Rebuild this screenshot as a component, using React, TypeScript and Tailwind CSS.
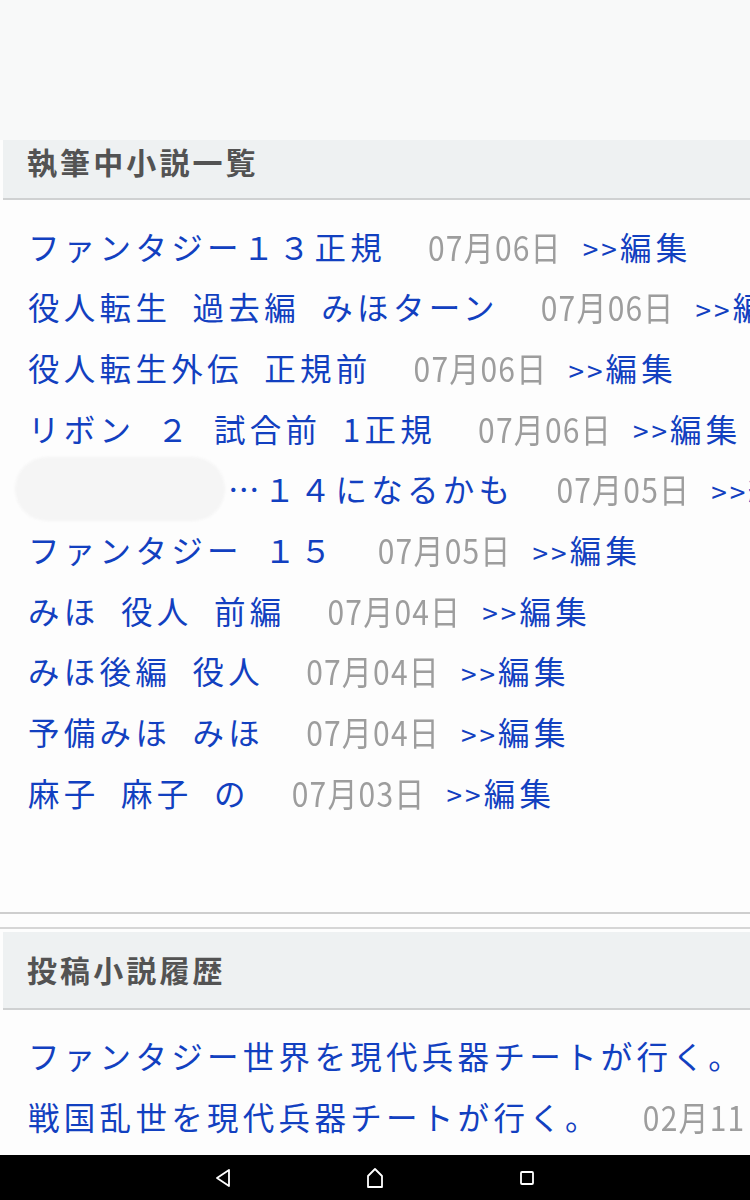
const drafts = [
  { title: "ファンタジー１３正規", date: "07月06日" },
  { title: "役人転生 過去編 みほターン", date: "07月06日" },
  { title: "役人転生外伝 正規前", date: "07月06日" },
  { title: "リボン ２ 試合前 1正規", date: "07月06日" },
  { title: "…１４になるかも", date: "07月05日", masked: true },
  { title: "ファンタジー １５", date: "07月05日" },
  { title: "みほ 役人 前編", date: "07月04日" },
  { title: "みほ後編 役人", date: "07月04日" },
  { title: "予備みほ みほ", date: "07月04日" },
  { title: "麻子 麻子 の", date: "07月03日" },
];

const posted = [
  { title: "ファンタジー世界を現代兵器チートが行く。", date: "02月11日" },
  { title: "戦国乱世を現代兵器チートが行く。", date: "02月11日" },
];

const font = { fontFamily: '"Noto Sans CJK JP", "Noto Sans", sans-serif' };

const SectionHeader = ({ label, tall }: { label: string; tall?: boolean }) => (
  <div
    className={`ml-[3px] flex items-center bg-[#eef1f2] border-b-2 border-[#cfd1d2] pl-[24px] ${
      tall ? "h-[78px]" : "h-[60px] pb-[16px]"
    }`}
  >
    <h2 className="text-[30px] font-bold tracking-[3.1px] text-[#535353]">{label}</h2>
  </div>
);

const Row = ({
  title,
  date,
  masked,
  edit = true,
}: {
  title: string;
  date: string;
  masked?: boolean;
  edit?: boolean;
}) => (
  <div className="flex h-[60.67px] items-center whitespace-nowrap pl-[28px] text-[31.5px] tracking-[4.3px] [word-spacing:10px] text-[#1240c0]">
    {masked && (
      <span className="-ml-[13px] mr-[3px] inline-block h-[64px] w-[210px] shrink-0 rounded-[32px] bg-[#f5f5f5] blur-[1px]" />
    )}
    <span>{title}</span>
    <span className="ml-[42px] inline-block scale-y-[1.15] text-[30px] tracking-[1.2px] text-[#9d9d9d]">
      {date}
    </span>
    {edit && (
      <span className="ml-[21px] flex items-center">
        <span className="mt-[4px] text-[28px] tracking-[3px]">&gt;&gt;</span>
        <span>編集</span>
      </span>
    )}
  </div>
);

const NavBar = () => (
  <div className="flex h-[45px] shrink-0 items-center justify-center gap-[128px] bg-black">
    <svg width="24" height="24" viewBox="0 0 24 24" fill="none" stroke="white" strokeWidth="1.8" strokeLinejoin="round">
      <path d="M18 4 L6 12 L18 20 Z" />
    </svg>
    <svg width="24" height="24" viewBox="0 0 24 24" fill="none" stroke="white" strokeWidth="1.8" strokeLinejoin="round">
      <path d="M12 3 L5 10 V21 H19 V10 Z" />
    </svg>
    <svg width="24" height="24" viewBox="0 0 24 24" fill="none" stroke="white" strokeWidth="1.8">
      <rect x="6" y="6" width="12" height="12" rx="1" />
    </svg>
  </div>
);

export default function App() {
  return (
    <div className="flex h-[1200px] w-[750px] flex-col overflow-hidden bg-[#fdfdfd]" style={font}>
      <div className="flex-1 overflow-hidden">
        <div className="h-[140px] bg-[#f8f9f9]" />
        <SectionHeader label="執筆中小説一覧" />
        <div className="border-b-2 border-[#cecece] pt-[16px] pb-[89px]">
          {drafts.map((d) => (
            <Row key={d.title} {...d} />
          ))}
        </div>
        <div className="mt-[13px] border-t-2 border-[#d6d6d6] pt-[3px]">
          <SectionHeader label="投稿小説履歴" tall />
          <div className="pt-[16px]">
            {posted.map((d) => (
              <Row key={d.title} {...d} />
            ))}
          </div>
        </div>
      </div>
      <NavBar />
    </div>
  );
}
